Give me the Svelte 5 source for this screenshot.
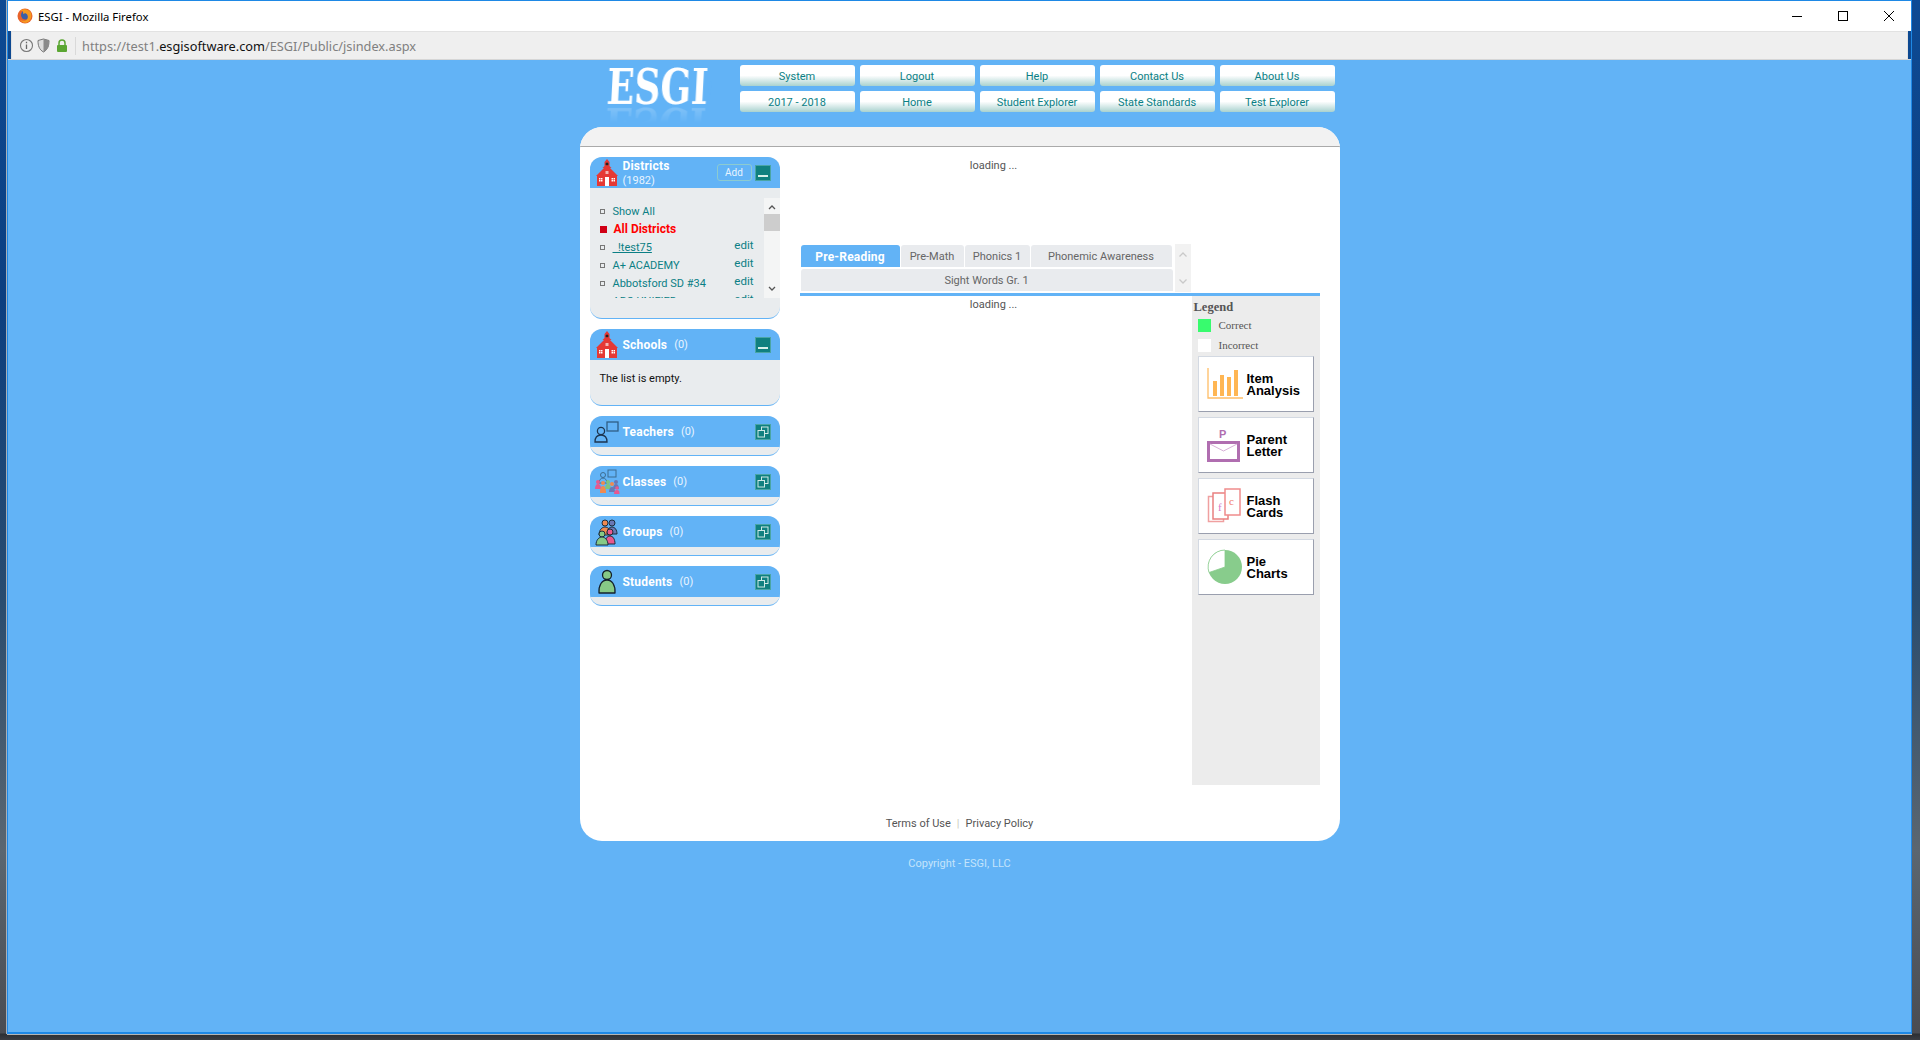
<script>
	const row1 = ['System', 'Logout', 'Help', 'Contact Us', 'About Us'];
	const row2 = ['2017 - 2018', 'Home', 'Student Explorer', 'State Standards', 'Test Explorer'];
	const districts = [
		{ name: 'Show All', plain: true },
		{ name: 'All Districts', active: true },
		{ name: '\u00a0\u00a0!test75', link: true, edit: true },
		{ name: 'A+ ACADEMY', edit: true },
		{ name: 'Abbotsford SD #34', edit: true },
		{ name: 'ABC UNIFIED', edit: true }
	];
	const closedPanels = [
		{ name: 'Teachers', icon: 'teacher' },
		{ name: 'Classes', icon: 'classes' },
		{ name: 'Groups', icon: 'groups' },
		{ name: 'Students', icon: 'student' }
	];
	const tools = [
		{ a: 'Item', b: 'Analysis', icon: 'bars' },
		{ a: 'Parent', b: 'Letter', icon: 'letter' },
		{ a: 'Flash', b: 'Cards', icon: 'cards' },
		{ a: 'Pie', b: 'Charts', icon: 'pie' }
	];
</script>

{#snippet school()}
	<svg class="picon" width="26" height="28" viewBox="0 0 26 28">
		<path d="M13 0l2.500 3v4l2 2h-9l2-2v-4z" fill="#e53935" />
		<circle cx="13" cy="5" r="1.500" fill="#222" />
		<path d="M13 6l9 9 2 2h-22l2-2z" fill="#e53935" />
		<rect x="3" y="16" width="20" height="11" fill="#e53935" />
		<rect x="11.500" y="12" width="3" height="3" fill="#f2b6b3" />
		<rect x="11" y="18" width="4" height="9" fill="#fff" />
		<path d="M5 19h1.500v1.500h-1.500zM7 19h1.500v1.500h-1.500zM5 21h1.500v1.500h-1.500zM7 21h1.500v1.500h-1.500zM17.500 19h1.500v1.500h-1.500zM19.500 19h1.500v1.500h-1.500zM17.500 21h1.500v1.500h-1.500zM19.500 21h1.500v1.500h-1.500z" fill="#fff" />
	</svg>
{/snippet}

{#snippet panelIcon(name)}
	{#if name === 'teacher'}
		<svg class="picon" width="26" height="24" viewBox="0 0 26 24">
			<rect x="13" y="2" width="11" height="9" fill="none" stroke="#2f5f86" stroke-width="1.3" />
			<circle cx="7" cy="11" r="3.6" fill="none" stroke="#1d3550" stroke-width="1.3" />
			<path d="M1 22c0-5 3-7 6-7s6 2 6 7z" fill="none" stroke="#1d3550" stroke-width="1.3" />
		</svg>
	{:else if name === 'classes'}
		<svg class="picon" width="26" height="26" viewBox="0 0 26 26">
			<rect x="14" y="1" width="8" height="7" fill="none" stroke="#3d6c90" />
			<circle cx="9" cy="6" r="2.5" fill="none" stroke="#3d6c90" />
			<path d="M5 14c0-3 2-5 4-5s4 2 4 5z" fill="none" stroke="#3d6c90" />
			<circle cx="4" cy="13" r="2" fill="#e8588e" />
			<path d="M1 20c0-3 1-5 3-5s3 2 3 5z" fill="#e8588e" />
			<circle cx="22" cy="13" r="2" fill="#6a78b4" />
			<path d="M19 20c0-3 1-5 3-5s3 2 3 5z" fill="#6a78b4" />
			<circle cx="9" cy="14" r="2" fill="#ef8a50" />
			<path d="M6 24c0-5 1-7 3-7s3 2 3 7z" fill="#ef8a50" />
			<circle cx="14" cy="13" r="2" fill="#7fc47f" />
			<path d="M11 20c0-3 1-5 3-5s3 2 3 5z" fill="#7fc47f" />
			<circle cx="18" cy="15" r="2" fill="#ef8a50" />
			<path d="M15 23c0-3 1-5 3-5s3 2 3 5z" fill="#6a78b4" />
			<circle cx="23" cy="19" r="1.8" fill="#e8588e" />
			<path d="M20 25c0-3 1-4 3-4s2.500 1 2.500 4z" fill="#e8588e" />
		</svg>
	{:else if name === 'groups'}
		<svg class="picon" width="26" height="28" viewBox="0 0 26 28">
			<g stroke="#1d2d3c" stroke-width="1">
				<circle cx="11" cy="5" r="3" fill="#ef8a50" />
				<path d="M5 17c0-5 3-8 6-8s6 3 6 8z" fill="#ef8a50" />
				<circle cx="18" cy="5" r="3" fill="#6a78b4" />
				<path d="M13 16c0-4 2-7 5-7s5 3 5 7z" fill="#6a78b4" />
				<circle cx="16" cy="14" r="3" fill="#e8588e" />
				<path d="M11 26c0-5 2-8 5-8s5 3 5 8z" fill="#e8588e" />
				<circle cx="8" cy="16" r="3" fill="#86c986" />
				<path d="M2 27c0-5 3-8 6-8s6 3 6 8z" fill="#86c986" />
			</g>
		</svg>
	{:else}
		<svg class="picon" width="26" height="26" viewBox="0 0 26 26">
			<circle cx="13" cy="6" r="4.500" fill="#86c986" stroke="#14202c" stroke-width="1.300" />
			<path d="M5 24c-.5-8 3-13 8-13s8.500 5 8 13z" fill="#86c986" stroke="#14202c" stroke-width="1.300" stroke-linejoin="round" />
		</svg>
	{/if}
{/snippet}

{#snippet toolIcon(name)}
	{#if name === 'bars'}
		<svg width="36" height="32" viewBox="0 0 36 32">
			<path d="M1 0v30h35" fill="none" stroke="#ffbd66" stroke-width="1.300" />
			<g fill="#ffb653">
				<rect x="6" y="13" width="4" height="15" />
				<rect x="13" y="7" width="4" height="21" />
				<rect x="20" y="9" width="4" height="19" />
				<rect x="27" y="2" width="4" height="26" />
			</g>
		</svg>
	{:else if name === 'letter'}
		<svg width="34" height="34" viewBox="0 0 34 34">
			<text x="12" y="10" class="ptext">P</text>
			<rect x="1.500" y="14.500" width="30" height="18" fill="#fff" stroke="#b06eb0" stroke-width="3" />
			<path d="M3 16l13.500 7 13.500-7" fill="none" stroke="#d8b0d8" />
		</svg>
	{:else if name === 'cards'}
		<svg width="36" height="36" viewBox="0 0 36 36">
			<rect x="1.500" y="8.500" width="15" height="25" fill="#fff" stroke="#f0a0a0" stroke-width="1.500" />
			<rect x="6" y="5" width="15" height="26" fill="#fff" stroke="#e98080" stroke-width="1.500" />
			<rect x="18" y="1" width="15" height="26" fill="#fff" stroke="#ef8c8c" stroke-width="1.500" />
			<text x="11" y="23" class="ftext">f</text>
			<text x="22" y="17" class="ctext">c</text>
		</svg>
	{:else}
		<svg width="36" height="36" viewBox="0 0 36 36">
			<circle cx="18" cy="18" r="17" fill="#88cc8c" />
			<path d="M18 18l-16 5.500a17 17 0 0 1 16-22.500z" fill="#fff" stroke="#88cc8c" stroke-width=".8" />
		</svg>
	{/if}
{/snippet}

{#snippet toggle(open)}
	<span class="toggle">
		{#if open}
			<span class="dash"></span>
		{:else}
			<svg width="12" height="12" viewBox="0 0 12 12">
				<rect x="4.500" y="1" width="6.500" height="6.500" fill="none" stroke="#cfe9e6" />
				<rect x="1" y="4.500" width="6.500" height="6.500" fill="#10807f" stroke="#cfe9e6" />
			</svg>
		{/if}
	</span>
{/snippet}

<div class="window">
	<div class="titlebar">
		<svg width="16" height="16" viewBox="0 0 16 16">
			<circle cx="8" cy="8" r="7.500" fill="#e8632a" />
			<circle cx="8.500" cy="7" r="4.500" fill="#3a5fa8" />
			<path d="M3 3c3-3 9-2 11 2 1 3 0 8-4 9.500-3 .8-6-.5-7-3 2 1.500 5 2 7 0 1.500-2 1-5-1-6-1-.5-2 0-3 .5 0-1 .5-2-.5-3z" fill="#f59a1f" />
		</svg>
		<span class="wintitle">ESGI - Mozilla Firefox</span>
		<div class="controls">
			<svg width="12" height="12" viewBox="0 0 12 12"><path d="M1 6.500h10" stroke="#000" /></svg>
			<svg width="12" height="12" viewBox="0 0 12 12"><rect x="1.500" y="1.500" width="9" height="9" fill="none" stroke="#000" /></svg>
			<svg width="12" height="12" viewBox="0 0 12 12"><path d="M1 1l10 10M11 1l-10 10" stroke="#000" /></svg>
		</div>
	</div>

	<div class="urlbar">
		<svg width="15" height="15" viewBox="0 0 15 15">
			<circle cx="7.500" cy="7.500" r="6" fill="none" stroke="#777" stroke-width="1.100" />
			<path d="M7.500 6.500v4.500M7.500 3.800v1.400" stroke="#666" stroke-width="1.300" />
		</svg>
		<svg width="13" height="15" viewBox="0 0 13 15">
			<path d="M1 2.500l5.500-1.500 5.500 1.500c0 5-1 9-5.500 11.500-4.500-2.500-5.500-6.500-5.500-11.500z" fill="#ddd" stroke="#777" />
			<path d="M6.500 1v13c4.500-2.500 5.500-6.500 5.500-11.500z" fill="#8a8a8a" />
		</svg>
		<svg class="lock" width="12" height="14" viewBox="0 0 12 14">
			<path d="M3 6v-2a3 3 0 0 1 6 0v2" fill="none" stroke="#5aa632" stroke-width="1.500" />
			<rect x="1" y="6" width="10" height="7" rx="1" fill="#5aa632" />
		</svg>
		<span class="sep"></span>
		<span class="url">https://test1.<b>esgisoftware.com</b>/ESGI/Public/jsindex.aspx</span>
	</div>

	<div class="page">
		<header>
			<div class="logo">
				<span class="mark">ESGI</span>
				<i class="spot s1"></i>
				<i class="spot s2"></i>
				<i class="spot s3"></i>
				<i class="slit"></i>
			</div>
			<nav>
				{#each [...row1, ...row2] as item}
					<a href="#top" class="navbtn">{item}</a>
				{/each}
			</nav>
		</header>

		<div class="card">
			<div class="strip"></div>
			<div class="cardbody">
				<aside>
					<section class="panel">
						<div class="phead">
							{@render school()}
							<div class="pname two">
								<b>Districts</b>
								<span>(1982)</span>
							</div>
							<span class="addbtn">Add</span>
							{@render toggle(true)}
						</div>
						<div class="pbody districts">
							<div class="listwrap">
								<ul>
									{#each districts as d}
										<li class:active={d.active}>
											<i class="bullet"></i>
											<span class="dname" class:link={d.link}>{d.name}</span>
											{#if d.edit}<span class="edit">edit</span>{/if}
										</li>
									{/each}
								</ul>
								<div class="scroll">
									<svg width="16" height="14" viewBox="0 0 16 14"><path d="M5 9l3-3 3 3" fill="none" stroke="#555" stroke-width="1.300" /></svg>
									<span class="thumb"></span>
									<svg class="down" width="16" height="14" viewBox="0 0 16 14"><path d="M5 6l3 3 3-3" fill="none" stroke="#555" stroke-width="1.300" /></svg>
								</div>
							</div>
						</div>
					</section>

					<section class="panel">
						<div class="phead">
							{@render school()}
							<div class="pname"><b>Schools</b><span>(0)</span></div>
							{@render toggle(true)}
						</div>
						<div class="pbody empty">The list is empty.</div>
					</section>

					{#each closedPanels as p}
						<section class="panel">
							<div class="phead">
								{@render panelIcon(p.icon)}
								<div class="pname"><b>{p.name}</b><span>(0)</span></div>
								{@render toggle(false)}
							</div>
							<div class="pbody closed"></div>
						</section>
					{/each}
				</aside>

				<main>
					<div class="toploading"><span class="loading">loading ...</span></div>
					<div class="tabsrow">
						<div class="tabs">
							<div class="tab on pre">Pre-Reading</div>
							<div class="tab math">Pre-Math</div>
							<div class="tab ph">Phonics 1</div>
							<div class="tab aw">Phonemic Awareness</div>
							<div class="tab wide">Sight Words Gr. 1</div>
						</div>
						<div class="tabscroll">
							<svg width="16" height="12" viewBox="0 0 16 12"><path d="M4.500 7.500l3.500-3.500 3.500 3.500" fill="none" stroke="#c9c9c9" stroke-width="1.300" /></svg>
							<svg width="16" height="12" viewBox="0 0 16 12"><path d="M4.500 4.500l3.500 3.500 3.500-3.500" fill="none" stroke="#c9c9c9" stroke-width="1.300" /></svg>
						</div>
					</div>
					<div class="lower">
						<div class="results"><span class="loading">loading ...</span></div>
						<div class="legend">
							<h4>Legend</h4>
							<div class="key"><i class="swatch green"></i>Correct</div>
							<div class="key"><i class="swatch"></i>Incorrect</div>
							<div class="toolist">
								{#each tools as t}
									<div class="tool">
										<span class="ticon">{@render toolIcon(t.icon)}</span>
										<span class="tname">{t.a}<br />{t.b}</span>
									</div>
								{/each}
							</div>
						</div>
					</div>
				</main>
			</div>
			<footer><span>Terms of Use</span><em>|</em><span>Privacy Policy</span></footer>
		</div>

		<div class="copyright">Copyright - ESGI, LLC</div>
	</div>
</div>

<style>
	:global(body) {
		margin: 0;
		height: 1040px;
		overflow: hidden;
		background:
			linear-gradient(180deg, transparent 0, transparent 1033px, #2c2f33 1034px, #3b3d42 1040px),
			linear-gradient(180deg, #0d4a94 0, #0c3f80 300px, #2a4c6e 600px, #5b6670 850px, #4a4c52 1033px);
	}

	.window {
		box-sizing: border-box;
		width: 1905px;
		height: 1034px;
		margin-left: 7px;
		display: flex;
		flex-direction: column;
		border: 1px solid #1e88e5;
		border-bottom-width: 2px;
		box-shadow: 0 1px 0 #b5b5b5, -1px 0 0 #a8b0b8;
		font-family: Roboto, 'Noto Sans', sans-serif;
		font-size: 11px;
	}

	.titlebar {
		height: 30px;
		flex: none;
		background: #fff;
		display: flex;
		align-items: center;
		padding: 0 0 0 9px;
	}

	.wintitle {
		margin-left: 5px;
		font-family: 'Noto Sans', sans-serif;
		font-size: 11.300px;
		color: #000;
	}

	.controls {
		margin-left: auto;
		margin-right: 16px;
		display: flex;
		gap: 34px;
	}

	.urlbar {
		height: 28px;
		flex: none;
		box-sizing: border-box;
		background: #efefef;
		margin: 0 3px 0 3px;
		border: 1px solid #e2e2e2;
		border-bottom: none;
		display: flex;
		align-items: center;
		padding-left: 7px;
		gap: 3px;
	}

	.lock {
		margin-left: 3px;
	}

	.sep {
		width: 1px;
		height: 18px;
		background: #d9d9d9;
		margin-left: 4px;
	}

	.url {
		margin-left: 3px;
		font-family: 'Noto Sans', sans-serif;
		font-size: 12.750px;
		color: #808080;
	}

	.url b {
		font-weight: 400;
		color: #111;
	}

	.page {
		flex: 1;
		background: #62b3f6;
		border-top: 1px solid #d6d6d6;
		display: flex;
		flex-direction: column;
		align-items: center;
	}

	header {
		box-sizing: border-box;
		width: 760px;
		height: 67px;
		padding: 5px 5px 0 27px;
		display: flex;
	}

	.logo {
		width: 133px;
		position: relative;
	}

	.mark {
		display: block;
		font-family: 'DejaVu Serif', serif;
		font-weight: 700;
		font-size: 48px;
		line-height: 44px;
		color: #fff;
		transform: scaleX(.75) skewX(-4deg);
		transform-origin: left;
		-webkit-box-reflect: below -6px linear-gradient(transparent 55%, rgba(255, 255, 255, .25));
	}

	.spot {
		position: absolute;
		width: 4px;
		height: 4px;
		border-radius: 50%;
		background: #62b3f6;
	}

	.s1 {
		left: 68px;
		top: 21px;
	}

	.s2 {
		left: 72px;
		top: 15px;
	}

	.s3 {
		left: 77px;
		top: 12px;
	}

	.slit {
		position: absolute;
		left: 102px;
		top: 16px;
		width: 2px;
		height: 14px;
		background: #62b3f6;
		transform: rotate(8deg);
	}

	nav {
		display: grid;
		grid-template-columns: repeat(5, 115px);
		grid-auto-rows: 21px;
		gap: 5px;
	}

	.navbtn {
		border-radius: 3px;
		background: linear-gradient(180deg, #fff 0, #fff 50%, #a9d2cf 100%);
		color: #0b7f85;
		text-decoration: none;
		text-align: center;
		line-height: 24px;
	}

	.card {
		width: 760px;
		height: 714px;
		flex: none;
		background: #fff;
		border-radius: 22px;
		overflow: hidden;
		display: flex;
		flex-direction: column;
	}

	.strip {
		height: 19px;
		flex: none;
		background: #f2f2f2;
		border-bottom: 1px solid #aaa;
	}

	.cardbody {
		flex: 1;
		display: flex;
		gap: 20px;
		padding: 10px 20px 0 10px;
		min-height: 0;
	}

	aside {
		width: 190px;
		flex: none;
		display: flex;
		flex-direction: column;
		gap: 10px;
	}

	.panel {
		border-radius: 12px;
		overflow: hidden;
		background: #e9ecee;
		border-bottom: 1px solid #62b3f6;
	}

	.phead {
		position: relative;
		height: 31px;
		background: #62b3f6;
		display: flex;
		align-items: center;
		padding: 0 9px 0 4px;
		color: #fff;
	}

	.picon {
		flex: none;
		width: 26px;
	}

	.pname {
		margin-left: 3px;
		flex: 1;
		display: flex;
		gap: 7px;
		align-items: center;
	}

	.pname b {
		font-weight: 700;
		font-size: 12px;
		letter-spacing: .2px;
	}

	.pname span {
		color: #e8f4ff;
	}

	.pname.two {
		flex-direction: column;
		align-items: flex-start;
		gap: 1px;
		line-height: 14px;
		padding-top: 2px;
	}

	.addbtn {
		box-sizing: border-box;
		width: 35px;
		height: 17px;
		border: 1px solid #8ccbd0;
		border-radius: 3px;
		text-align: center;
		line-height: 15px;
		font-size: 10px;
		margin-right: 3px;
		color: #e8f4ff;
	}

	.toggle {
		box-sizing: border-box;
		width: 16px;
		height: 16px;
		background: #10807f;
		border: 1px solid #4aa5a5;
		display: flex;
		align-items: center;
		justify-content: center;
		flex: none;
	}

	.dash {
		width: 10px;
		height: 2px;
		background: #d7efe9;
		margin-top: 7px;
	}

	.pbody.districts {
		height: 130px;
		padding-top: 10px;
		box-sizing: border-box;
	}

	.listwrap {
		height: 100px;
		display: flex;
		overflow: hidden;
	}

	ul {
		list-style: none;
		margin: 0;
		padding: 4px 10px 0 10px;
		flex: 1;
	}

	li {
		height: 18px;
		display: flex;
		align-items: center;
		color: #0b7f85;
		position: relative;
	}

	.bullet {
		width: 3px;
		height: 3px;
		border: 1px solid #777;
		margin-right: 8px;
		flex: none;
	}

	li.active {
		color: #f00;
		font-weight: 700;
		font-size: 12px;
	}

	li.active .bullet {
		width: 7px;
		height: 7px;
		background: #d00015;
		border: none;
		margin-right: 4px;
		margin-left: 0;
	}

	li.active .dname {
		margin-left: 3px;
	}

	.dname.link {
		text-decoration: underline;
	}

	.edit {
		margin-left: auto;
		margin-top: -4px;
		font-size: 11.500px;
	}

	.scroll {
		width: 16px;
		flex: none;
		background: #f4f5f5;
		position: relative;
		padding-top: 2px;
	}

	.scroll svg {
		display: block;
	}

	.thumb {
		display: block;
		height: 17px;
		background: #cdcdcd;
		margin-top: 0;
	}

	.scroll .down {
		position: absolute;
		bottom: 3px;
		left: 0;
	}

	.pbody.empty {
		height: 45px;
		box-sizing: border-box;
		padding: 12px 10px 0;
		color: #111;
	}

	.pbody.closed {
		height: 8px;
	}

	main {
		width: 520px;
		flex: none;
		display: flex;
		flex-direction: column;
	}

	.loading {
		color: #555;
	}

	.toploading {
		width: 388px;
		height: 87px;
		text-align: center;
		padding-top: 1px;
		box-sizing: border-box;
		line-height: 16px;
	}

	.tabsrow {
		display: flex;
		height: 49px;
		padding-left: 1px;
	}

	.tabs {
		width: 372px;
		height: 46px;
		margin-top: 1px;
		display: flex;
		flex-wrap: wrap;
		gap: 2px 1px;
		align-content: flex-start;
	}

	.tab {
		box-sizing: border-box;
		height: 22px;
		background: #e9ebee;
		color: #666;
		text-align: center;
		line-height: 24px;
		border-radius: 3px 3px 0 0;
	}

	.tab.on {
		background: #62b3f6;
		color: #fff;
		font-weight: 700;
		font-size: 12px;
		letter-spacing: .2px;
	}

	.pre {
		width: 99px;
	}

	.math {
		width: 63px;
	}

	.ph {
		width: 65px;
	}

	.aw {
		width: 141px;
	}

	.wide {
		width: 372px;
	}

	.tabscroll {
		width: 16px;
		height: 48px;
		margin-left: 2px;
		background: #f2f2f2;
		display: flex;
		flex-direction: column;
		justify-content: space-between;
		padding: 5px 0;
		box-sizing: border-box;
	}

	.lower {
		border-top: 3px solid #62b3f6;
		display: flex;
		height: 493px;
		box-sizing: border-box;
	}

	.results {
		width: 388px;
		flex: none;
		text-align: center;
		line-height: 16px;
		padding-top: 1px;
	}

	.legend {
		width: 128px;
		margin-left: 4px;
		height: 489px;
		background: #ececec;
		box-sizing: border-box;
		padding: 4px 6px 0;
		font-family: 'Liberation Serif', serif;
		color: #555;
	}

	h4 {
		margin: 0 0 0 -4px;
		font-size: 12.500px;
		line-height: 15px;
		color: #555;
	}

	.key {
		display: flex;
		align-items: center;
		height: 20px;
		font-size: 11px;
	}

	.swatch {
		width: 13px;
		height: 13px;
		background: #fff;
		margin-right: 8px;
	}

	.swatch.green {
		background: #38fb6e;
	}

	.toolist {
		display: flex;
		flex-direction: column;
		gap: 5px;
		margin-top: 1px;
	}

	.tool {
		box-sizing: border-box;
		width: 116px;
		height: 56px;
		background: #fff;
		border: 1px solid #d3d9e2;
		border-bottom-color: #9a9fae;
		border-right-color: #9a9fae;
		display: flex;
		align-items: center;
		padding-left: 8px;
	}

	.ticon {
		width: 40px;
		flex: none;
		display: flex;
	}

	.tname {
		font-family: 'Liberation Sans', sans-serif;
		font-weight: 700;
		font-size: 13px;
		line-height: 12px;
		color: #000;
		margin-top: 1px;
	}

	.ptext {
		font-family: 'Liberation Sans', sans-serif;
		font-weight: 700;
		font-size: 11px;
		fill: #b06eb0;
	}

	.ftext {
		font-family: 'Liberation Serif', serif;
		font-size: 11px;
		fill: #d878c8;
	}

	.ctext {
		font-family: 'Liberation Serif', serif;
		font-size: 11px;
		fill: #ef7a6a;
	}

	footer {
		height: 36px;
		flex: none;
		display: flex;
		justify-content: center;
		gap: 6px;
		color: #555;
		line-height: 16px;
		box-sizing: border-box;
		padding-top: 11px;
	}

	footer em {
		font-style: normal;
		color: #ccb;
	}

	.copyright {
		margin-top: 15px;
		color: #c4e4fb;
		line-height: 16px;
	}
</style>
